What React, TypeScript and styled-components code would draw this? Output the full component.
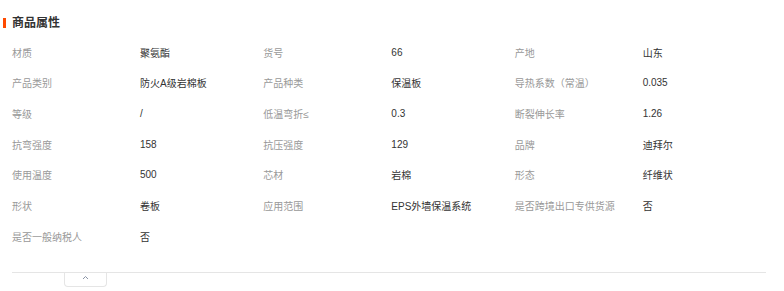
import React from "react";
import styled, { createGlobalStyle } from "styled-components";

const GlobalStyle = createGlobalStyle`
  html, body { margin: 0; padding: 0; background: #fff; }
  body { font-family: "Liberation Sans", "Noto Sans CJK SC", sans-serif; }
`;

const Page = styled.div`
  width: 784px;
  padding-top: 13px;
  box-sizing: border-box;
`;

const Header = styled.div`
  display: flex;
  align-items: center;
  gap: 6px;
  padding-left: 3px;
  height: 20px;
`;

const Bar = styled.span`
  width: 3px;
  height: 10px;
  background: #ff4a00;
`;

const Title = styled.h2`
  margin: 0;
  font-size: 12px;
  font-weight: bold;
  color: #333;
  line-height: 20px;
`;

const Grid = styled.div`
  margin: 4px 0 0 12px;
  width: 754px;
  display: grid;
  grid-template-columns: repeat(3, 128px 1fr);
  grid-auto-rows: 30.67px;
  align-items: center;
  font-size: 10px;
`;

const Label = styled.div`
  color: #999;
  white-space: nowrap;
`;

const Value = styled.div`
  color: #333;
  white-space: nowrap;
`;

const Footer = styled.div`
  margin: 20px 0 0 12px;
  width: 754px;
  border-top: 1px solid #e5e5e5;
`;

const Toggle = styled.button`
  margin-left: 52px;
  width: 43px;
  height: 14px;
  padding: 0;
  box-sizing: border-box;
  background: #fff;
  border: 1px solid #e5e5e5;
  border-top: none;
  border-radius: 0 0 4px 4px;
  display: flex;
  align-items: flex-start;
  justify-content: center;
  padding-top: 2px;
  cursor: pointer;
`;

const props: [string, string][] = [
  ["材质", "聚氨酯"],
  ["货号", "66"],
  ["产地", "山东"],
  ["产品类别", "防火A级岩棉板"],
  ["产品种类", "保温板"],
  ["导热系数（常温）", "0.035"],
  ["等级", "/"],
  ["低温弯折≤", "0.3"],
  ["断裂伸长率", "1.26"],
  ["抗弯强度", "158"],
  ["抗压强度", "129"],
  ["品牌", "迪拜尔"],
  ["使用温度", "500"],
  ["芯材", "岩棉"],
  ["形态", "纤维状"],
  ["形状", "卷板"],
  ["应用范围", "EPS外墙保温系统"],
  ["是否跨境出口专供货源", "否"],
  ["是否一般纳税人", "否"],
];

export default function App() {
  return (
    <>
      <GlobalStyle />
      <Page>
        <Header>
          <Bar />
          <Title>商品属性</Title>
        </Header>
        <Grid>
          {props.map(([k, v]) => (
            <React.Fragment key={k}>
              <Label>{k}</Label>
              <Value>{v}</Value>
            </React.Fragment>
          ))}
        </Grid>
        <Footer>
          <Toggle aria-label="收起">
            <svg width="7" height="5" viewBox="0 0 7 5">
              <path d="M1 4 L3.5 1.5 L6 4" fill="none" stroke="#8a94a6" strokeWidth="1" />
            </svg>
          </Toggle>
        </Footer>
      </Page>
    </>
  );
}
